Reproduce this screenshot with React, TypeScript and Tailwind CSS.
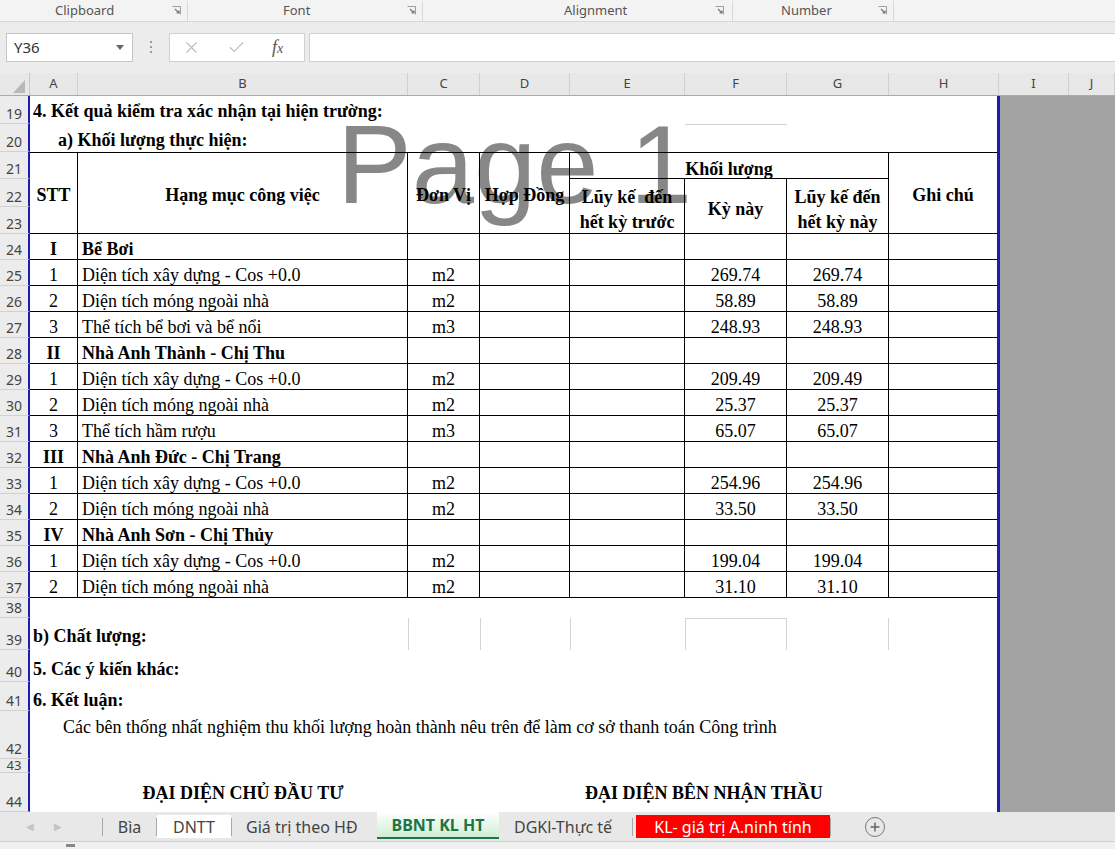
import { X, Check } from "lucide-react";

type Item = { stt: string; name: string; unit?: string; val?: string; group?: boolean };

const items: Item[] = [
  { stt: "I", name: "Bể Bơi", group: true },
  { stt: "1", name: "Diện tích xây dựng - Cos +0.0", unit: "m2", val: "269.74" },
  { stt: "2", name: "Diện tích móng ngoài nhà", unit: "m2", val: "58.89" },
  { stt: "3", name: "Thể tích bể bơi và bể nổi", unit: "m3", val: "248.93" },
  { stt: "II", name: "Nhà Anh Thành - Chị Thu", group: true },
  { stt: "1", name: "Diện tích xây dựng - Cos +0.0", unit: "m2", val: "209.49" },
  { stt: "2", name: "Diện tích móng ngoài nhà", unit: "m2", val: "25.37" },
  { stt: "3", name: "Thể tích hầm rượu", unit: "m3", val: "65.07" },
  { stt: "III", name: "Nhà Anh Đức - Chị Trang", group: true },
  { stt: "1", name: "Diện tích xây dựng - Cos +0.0", unit: "m2", val: "254.96" },
  { stt: "2", name: "Diện tích móng ngoài nhà", unit: "m2", val: "33.50" },
  { stt: "IV", name: "Nhà Anh Sơn - Chị Thủy", group: true },
  { stt: "1", name: "Diện tích xây dựng - Cos +0.0", unit: "m2", val: "199.04" },
  { stt: "2", name: "Diện tích móng ngoài nhà", unit: "m2", val: "31.10" },
];

const columns = ["A", "B", "C", "D", "E", "F", "G", "H", "I", "J"];

const cell = "flex items-center pt-[5px] whitespace-nowrap border-r border-b border-black";
const head = "flex items-center justify-center text-center font-bold border-t border-r border-b border-black";

function Launcher() {
  return (
    <svg width="9" height="9" viewBox="0 0 9 9" className="ml-auto text-[#777]">
      <path d="M0.5 0.5h8v8" fill="none" stroke="currentColor" strokeWidth="1" opacity="0.7" />
      <path d="M3 3l4 4M7 4.5V7H4.5" fill="none" stroke="currentColor" strokeWidth="1.2" />
    </svg>
  );
}

function RowNo({ n, tight = false }: { n: number; tight?: boolean }) {
  return (
    <div
      className={`col-start-1 flex items-end justify-center overflow-hidden border-b border-[#d0d0d0] border-r-2 border-r-[#1c1cb0] bg-[#ececec] font-['Noto_Sans',sans-serif] text-[#444] ${
        tight ? "text-[13px] leading-[13px]" : "text-[14px] leading-[18px]"
      }`}
    >
      {n}
    </div>
  );
}

function DataRow({ item, n }: { item: Item; n: number }) {
  const weight = item.group ? "font-bold" : "";
  return (
    <>
      <RowNo n={n} />
      <div className={`${cell} justify-center ${weight}`}>{item.stt}</div>
      <div className={`${cell} pl-1 ${weight}`}>{item.name}</div>
      <div className={`${cell} justify-center`}>{item.unit}</div>
      <div className={cell} />
      <div className={cell} />
      <div className={`${cell} justify-center`}>{item.val}</div>
      <div className={`${cell} justify-center`}>{item.val}</div>
      <div className="border-b border-black" />
    </>
  );
}

function Sheet() {
  return (
    <div className="relative h-[716px] overflow-hidden bg-white">
      {/* page number shown behind the cells in page break preview */}
      <div className="absolute left-[337px] top-[13px] font-['Liberation_Sans',sans-serif] text-[112px] leading-none text-[#878787] select-none">
        Page 1
      </div>

      <div className="relative grid grid-cols-[30px_48px_330px_72px_90px_115px_102px_102px_108px_1fr] grid-rows-[28px_28px_27px_28px_27px_repeat(14,26px)_20px_32px_32px_29px_48px_14px_39px] font-['Liberation_Serif',serif] text-[18px] leading-[21px] text-black">
        <div className="col-start-10 row-span-full border-l-[3px] border-[#1c1cb0] bg-[#a3a3a3]" />

        {/* 19 */}
        <RowNo n={19} />
        <div className="col-span-8 flex items-end pb-[2px] pl-[3px] font-bold whitespace-nowrap">
          4. Kết quả kiểm tra xác nhận tại hiện trường:
        </div>

        {/* 20 */}
        <RowNo n={20} />
        <div className="col-span-5 flex items-end pb-[1px] pl-[28px] font-bold whitespace-nowrap">
          a) Khối lượng thực hiện:
        </div>
        <div className="border-t border-[#cfcfcf]" />
        <div className="col-span-2" />

        {/* 21 - 23 header */}
        <RowNo n={21} />
        <div className={`${head} row-span-3 pt-[4px]`}>STT</div>
        <div className={`${head} row-span-3 pt-[4px]`}>Hạng mục công việc</div>
        <div className={`${head} row-span-3 pt-[4px] whitespace-nowrap`}>Đơn Vị</div>
        <div className={`${head} row-span-3 pt-[4px] whitespace-nowrap`}>Hợp Đồng</div>
        <div className={`${head} col-span-3 pt-[7px]`}>Khối lượng</div>
        <div className="row-span-3 flex items-center justify-center border-t border-b border-black pt-[4px] font-bold">Ghi chú</div>

        <RowNo n={22} />
        <div className="row-span-2 flex flex-col items-center justify-center border-r border-b border-black pt-[8px] font-bold leading-[25px]">
          <span className="whitespace-pre">Lũy kế  đến</span>
          <span>hết kỳ trước</span>
        </div>
        <div className="row-span-2 flex items-center justify-center border-r border-b border-black pt-[6px] font-bold">Kỳ này</div>
        <div className="row-span-2 flex flex-col items-center justify-center border-r border-b border-black pt-[8px] font-bold leading-[25px]">
          <span>Lũy kế đến</span>
          <span>hết kỳ này</span>
        </div>

        <RowNo n={23} />

        {/* 24 - 37 */}
        {items.map((item, i) => (
          <DataRow key={i} item={item} n={24 + i} />
        ))}

        {/* 38 */}
        <RowNo n={38} />
        <div className="col-span-8" />

        {/* 39 */}
        <RowNo n={39} />
        <div className="col-span-2 flex items-end pb-[3px] pl-[3px] font-bold">b) Chất lượng:</div>
        <div className="border-l border-[#d4d4d4]" />
        <div className="border-l border-[#d4d4d4]" />
        <div className="border-l border-[#d4d4d4]" />
        <div className="border-l border-t border-r border-[#d4d4d4]" />
        <div className="border-r border-[#d4d4d4]" />
        <div />

        {/* 40 */}
        <RowNo n={40} />
        <div className="col-span-8 flex items-end pb-[2px] pl-[3px] font-bold">5. Các ý kiến khác:</div>

        {/* 41 */}
        <RowNo n={41} />
        <div className="col-span-8 flex items-end pl-[3px] font-bold">6. Kết luận:</div>

        {/* 42 */}
        <RowNo n={42} />
        <div className="col-span-8 pt-[6px] pl-[33px] whitespace-nowrap">
          Các bên thống nhất nghiệm thu khối lượng hoàn thành nêu trên để làm cơ sở thanh toán Công trình
        </div>

        {/* 43 */}
        <RowNo n={43} tight />
        <div className="col-span-8" />

        {/* 44 */}
        <RowNo n={44} />
        <div />
        <div className="flex items-center justify-center pt-[2px] font-bold whitespace-nowrap">ĐẠI DIỆN CHỦ ĐẦU TƯ</div>
        <div className="col-span-2" />
        <div className="col-span-4 flex items-center pt-[2px] pl-[15px] font-bold whitespace-nowrap">
          ĐẠI DIỆN BÊN NHẬN THẦU
        </div>
      </div>
    </div>
  );
}

function SheetTabs() {
  const sep = <div className="h-[18px] w-px bg-[#a8a8a8]" />;
  return (
    <div className="flex h-[29px] items-center bg-[#e8e8e8] font-['Noto_Sans',sans-serif] text-[16px] text-[#444]">
      <span className="ml-[26px] text-[10px] text-[#c4c4c4]">◀</span>
      <span className="ml-[20px] text-[10px] text-[#c4c4c4]">▶</span>
      <div className="ml-[40px]">{sep}</div>
      <div className="w-[53px] text-center">Bìa</div>
      {sep}
      <div className="flex h-[23px] w-[74px] items-center justify-center bg-white">DNTT</div>
      {sep}
      <div className="w-[145px] pl-[14px] whitespace-nowrap">Giá trị theo HĐ</div>
      <div className="flex h-[27px] w-[122px] items-center justify-center self-start border-b-2 border-[#217346] bg-gradient-to-b from-white to-[#cfeed5] font-bold text-[#217346]">
        BBNT KL HT
      </div>
      <div className="w-[133px] pl-[15px] whitespace-nowrap">DGKl-Thực tế</div>
      {sep}
      <div className="ml-[3px] flex h-[23px] w-[194px] items-center justify-center bg-[#ff0000] text-white whitespace-nowrap">
        KL- giá trị A.ninh tính
      </div>
      {sep}
      <div className="ml-[34px] flex h-[20px] w-[20px] items-center justify-center rounded-full border-[1.5px] border-[#777] text-[#666]">
        <svg width="10" height="10" viewBox="0 0 10 10">
          <path d="M5 0.5v9M0.5 5h9" stroke="currentColor" strokeWidth="1.5" />
        </svg>
      </div>
    </div>
  );
}

export default function App() {
  return (
    <div className="flex h-[849px] w-[1115px] flex-col overflow-hidden bg-white">
      {/* ribbon group captions */}
      <div className="flex h-[22px] items-center border-b border-[#d6d6d6] bg-[#f3f3f3] font-['Noto_Sans',sans-serif] text-[13px] text-[#555]">
        <div className="flex h-[20px] w-[188px] items-center border-r border-[#d8d8d8] pl-[55px] pr-[6px]">
          <span>Clipboard</span>
          <Launcher />
        </div>
        <div className="flex h-[20px] w-[235px] items-center border-r border-[#d8d8d8] pl-[95px] pr-[6px]">
          <span>Font</span>
          <Launcher />
        </div>
        <div className="flex h-[20px] w-[310px] items-center border-r border-[#d8d8d8] pl-[141px] pr-[8px]">
          <span>Alignment</span>
          <Launcher />
        </div>
        <div className="flex h-[20px] w-[161px] items-center border-r border-[#d8d8d8] pl-[48px] pr-[6px]">
          <span>Number</span>
          <Launcher />
        </div>
      </div>

      {/* formula bar */}
      <div className="flex h-[51px] items-start bg-[#ececec] pt-[11px] font-['Noto_Sans',sans-serif]">
        <div className="ml-[6px] flex h-[29px] w-[127px] items-center border border-[#c6c6c6] bg-white pl-[7px] pr-[8px] text-[15px] text-[#333]">
          <span>Y36</span>
          <svg width="8" height="5" viewBox="0 0 8 5" className="ml-auto">
            <path d="M0 0h8L4 5z" fill="#666" />
          </svg>
        </div>
        <div className="ml-[17px] mt-[8px] flex flex-col gap-[3px]">
          <span className="h-[2px] w-[2px] bg-[#9a9a9a]" />
          <span className="h-[2px] w-[2px] bg-[#9a9a9a]" />
          <span className="h-[2px] w-[2px] bg-[#9a9a9a]" />
        </div>
        <div className="ml-[17px] flex h-[29px] w-[136px] items-center border border-[#d0d0d0] bg-white text-[#bdbdbd]">
          <X size={19} strokeWidth={1.4} className="ml-[12px]" />
          <Check size={19} strokeWidth={1.4} className="ml-[26px]" />
          <span className="ml-[26px] font-['Liberation_Serif',serif] text-[18px] italic text-[#555]">
            f<span className="text-[14px]">x</span>
          </span>
        </div>
        <div className="ml-[4px] h-[29px] flex-1 border border-r-0 border-[#d0d0d0] bg-white" />
      </div>

      {/* column letters */}
      <div className="grid h-[23px] grid-cols-[30px_48px_330px_72px_90px_115px_102px_102px_110px_70px_1fr] border-b border-[#ababab] bg-[#e8e8e8] font-['Noto_Sans',sans-serif] text-[13px] text-[#444]">
        <div className="flex items-end justify-end border-r border-[#c8c8c8] pb-[2px] pr-[4px]">
          <svg width="12" height="13" viewBox="0 0 12 13">
            <path d="M12 0V13H0z" fill="#b8b8b8" />
          </svg>
        </div>
        {columns.map((c) => (
          <div key={c} className="flex items-center justify-center border-r border-[#d0d0d0]">
            {c}
          </div>
        ))}
      </div>

      <Sheet />

      <SheetTabs />

      {/* status bar */}
      <div className="flex-1 border-t border-[#cfcfcf] bg-[#f0f0f0]">
        <div className="ml-[66px] mt-[2px] h-[3px] w-[9px] bg-[#888]" />
      </div>
    </div>
  );
}
